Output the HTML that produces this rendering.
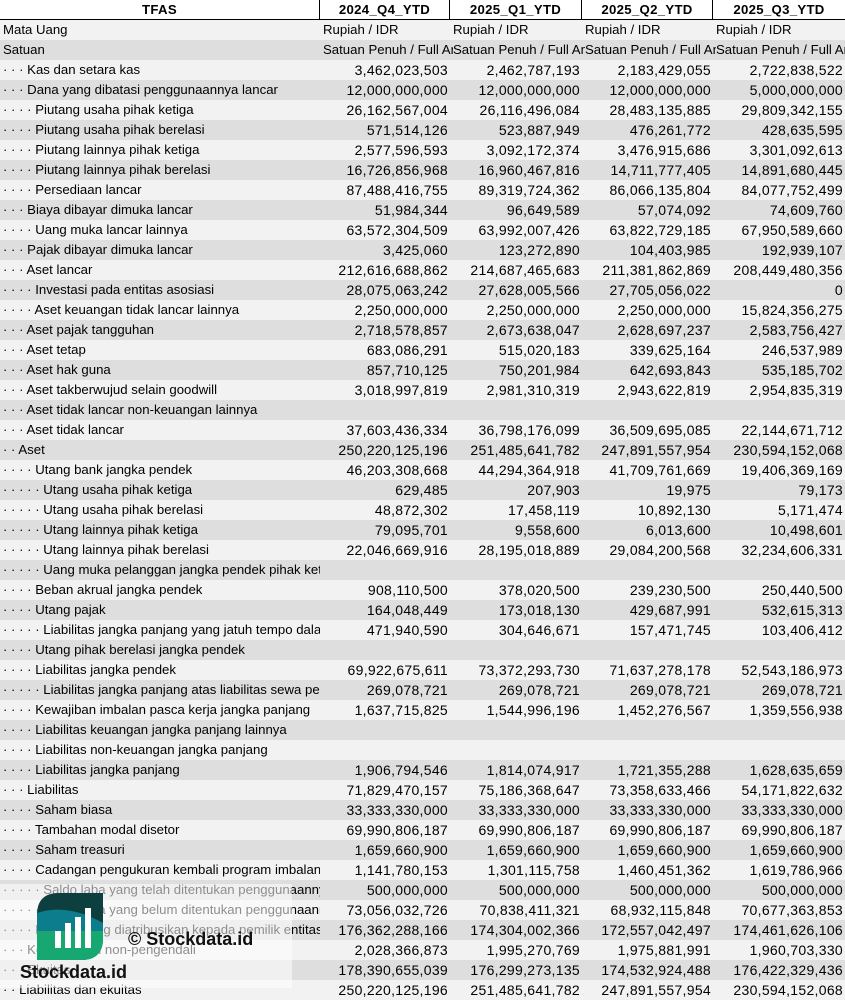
<!DOCTYPE html><html><head><meta charset="utf-8"><style>
body{margin:0;width:845px;height:1001px;overflow:hidden;background:#fff;font-family:"Liberation Sans",Arial,sans-serif;font-size:13.2px;color:#000;position:relative}
.r{position:absolute;left:0;width:845px;height:20px;line-height:20px}
.c{position:absolute;top:0;height:20px;overflow:hidden;white-space:nowrap}
.l{left:3px;width:317px}
.v{text-align:right;padding-right:2px;box-sizing:border-box;font-size:14px;letter-spacing:0.3px}
.c1{left:320px;width:130px}.c2{left:450px;width:132px}.c3{left:582px;width:131px}.c4{left:713px;width:132px}
.h{font-weight:bold;text-align:center;border-right:1px solid #000;box-sizing:border-box;letter-spacing:0.3px}
.tl{text-align:left;padding-left:3px}
</style></head><body>
<div class="r" style="top:0;background:#fff;border-bottom:1.5px solid #000;height:19px">
<div class="c h" style="left:0;width:320px">TFAS</div>
<div class="c h" style="left:320px;width:130px">2024_Q4_YTD</div>
<div class="c h" style="left:450px;width:132px">2025_Q1_YTD</div>
<div class="c h" style="left:582px;width:131px">2025_Q2_YTD</div>
<div class="c h" style="left:713px;width:132px;border-right:none">2025_Q3_YTD</div>
</div>
<div id="rows"></div>
<div style="position:absolute;left:0;top:884px;width:292px;height:104px;background:rgba(255,255,255,0.55)"></div>
<svg style="position:absolute;left:37px;top:893px" width="66" height="67" viewBox="0 0 66 67">
<defs><clipPath id="lf"><path d="M0 22 Q0 0 22 0 L66 0 L66 45 Q66 67 44 67 L0 67 Z"/></clipPath></defs>
<g clip-path="url(#lf)"><rect width="66" height="67" fill="#0e3f3f"/><path d="M0 20 Q30 10 66 30 L66 67 L0 67Z" fill="#0b7d8c"/><path d="M0 38 L66 38 L66 67 L0 67Z" fill="#17a872"/></g>
<rect x="18" y="38" width="6" height="17" fill="#fff"/><rect x="28" y="30" width="6" height="25" fill="#fff"/><rect x="38" y="24" width="6" height="31" fill="#fff"/><rect x="48" y="15" width="6" height="40" fill="#fff"/>
</svg>
<div style="position:absolute;left:128px;top:929px;font-weight:bold;font-size:18px;color:#111">© Stockdata.id</div>
<div style="position:absolute;left:20px;top:962px;font-weight:bold;font-size:18px;color:#111">Stockdata.id</div>
<script>
const D=[
["Mata Uang",0,"Rupiah / IDR","Rupiah / IDR","Rupiah / IDR","Rupiah / IDR",1],
["Satuan",0,"Satuan Penuh / Full Amount","Satuan Penuh / Full Amount","Satuan Penuh / Full Amount","Satuan Penuh / Full Amount",1],
["Kas dan setara kas",3,"3,462,023,503","2,462,787,193","2,183,429,055","2,722,838,522"],
["Dana yang dibatasi penggunaannya lancar",3,"12,000,000,000","12,000,000,000","12,000,000,000","5,000,000,000"],
["Piutang usaha pihak ketiga",4,"26,162,567,004","26,116,496,084","28,483,135,885","29,809,342,155"],
["Piutang usaha pihak berelasi",4,"571,514,126","523,887,949","476,261,772","428,635,595"],
["Piutang lainnya pihak ketiga",4,"2,577,596,593","3,092,172,374","3,476,915,686","3,301,092,613"],
["Piutang lainnya pihak berelasi",4,"16,726,856,968","16,960,467,816","14,711,777,405","14,891,680,445"],
["Persediaan lancar",4,"87,488,416,755","89,319,724,362","86,066,135,804","84,077,752,499"],
["Biaya dibayar dimuka lancar",3,"51,984,344","96,649,589","57,074,092","74,609,760"],
["Uang muka lancar lainnya",4,"63,572,304,509","63,992,007,426","63,822,729,185","67,950,589,660"],
["Pajak dibayar dimuka lancar",3,"3,425,060","123,272,890","104,403,985","192,939,107"],
["Aset lancar",3,"212,616,688,862","214,687,465,683","211,381,862,869","208,449,480,356"],
["Investasi pada entitas asosiasi",4,"28,075,063,242","27,628,005,566","27,705,056,022","0"],
["Aset keuangan tidak lancar lainnya",4,"2,250,000,000","2,250,000,000","2,250,000,000","15,824,356,275"],
["Aset pajak tangguhan",3,"2,718,578,857","2,673,638,047","2,628,697,237","2,583,756,427"],
["Aset tetap",3,"683,086,291","515,020,183","339,625,164","246,537,989"],
["Aset hak guna",3,"857,710,125","750,201,984","642,693,843","535,185,702"],
["Aset takberwujud selain goodwill",3,"3,018,997,819","2,981,310,319","2,943,622,819","2,954,835,319"],
["Aset tidak lancar non-keuangan lainnya",3,"","","",""],
["Aset tidak lancar",3,"37,603,436,334","36,798,176,099","36,509,695,085","22,144,671,712"],
["Aset",2,"250,220,125,196","251,485,641,782","247,891,557,954","230,594,152,068"],
["Utang bank jangka pendek",4,"46,203,308,668","44,294,364,918","41,709,761,669","19,406,369,169"],
["Utang usaha pihak ketiga",5,"629,485","207,903","19,975","79,173"],
["Utang usaha pihak berelasi",5,"48,872,302","17,458,119","10,892,130","5,171,474"],
["Utang lainnya pihak ketiga",5,"79,095,701","9,558,600","6,013,600","10,498,601"],
["Utang lainnya pihak berelasi",5,"22,046,669,916","28,195,018,889","29,084,200,568","32,234,606,331"],
["Uang muka pelanggan jangka pendek pihak ketiga",5,"","","",""],
["Beban akrual jangka pendek",4,"908,110,500","378,020,500","239,230,500","250,440,500"],
["Utang pajak",4,"164,048,449","173,018,130","429,687,991","532,615,313"],
["Liabilitas jangka panjang yang jatuh tempo dalam satu tahun",5,"471,940,590","304,646,671","157,471,745","103,406,412"],
["Utang pihak berelasi jangka pendek",4,"","","",""],
["Liabilitas jangka pendek",4,"69,922,675,611","73,372,293,730","71,637,278,178","52,543,186,973"],
["Liabilitas jangka panjang atas liabilitas sewa pembiayaan",5,"269,078,721","269,078,721","269,078,721","269,078,721"],
["Kewajiban imbalan pasca kerja jangka panjang",4,"1,637,715,825","1,544,996,196","1,452,276,567","1,359,556,938"],
["Liabilitas keuangan jangka panjang lainnya",4,"","","",""],
["Liabilitas non-keuangan jangka panjang",4,"","","",""],
["Liabilitas jangka panjang",4,"1,906,794,546","1,814,074,917","1,721,355,288","1,628,635,659"],
["Liabilitas",3,"71,829,470,157","75,186,368,647","73,358,633,466","54,171,822,632"],
["Saham biasa",4,"33,333,330,000","33,333,330,000","33,333,330,000","33,333,330,000"],
["Tambahan modal disetor",4,"69,990,806,187","69,990,806,187","69,990,806,187","69,990,806,187"],
["Saham treasuri",4,"1,659,660,900","1,659,660,900","1,659,660,900","1,659,660,900"],
["Cadangan pengukuran kembali program imbalan pasti",4,"1,141,780,153","1,301,115,758","1,460,451,362","1,619,786,966"],
["Saldo laba yang telah ditentukan penggunaannya",5,"500,000,000","500,000,000","500,000,000","500,000,000"],
["Saldo laba yang belum ditentukan penggunaannya",5,"73,056,032,726","70,838,411,321","68,932,115,848","70,677,363,853"],
["Ekuitas yang diatribusikan kepada pemilik entitas induk",4,"176,362,288,166","174,304,002,366","172,557,042,497","174,461,626,106"],
["Kepentingan non-pengendali",3,"2,028,366,873","1,995,270,769","1,975,881,991","1,960,703,330"],
["Ekuitas",3,"178,390,655,039","176,299,273,135","174,532,924,488","176,422,329,436"],
["Liabilitas dan ekuitas",2,"250,220,125,196","251,485,641,782","247,891,557,954","230,594,152,068"]];
let h="";D.forEach((d,i)=>{const bg=i%2==0?"#f2f2f2":"#dedede";const dots=d[1]?Array(d[1]).fill("·").join(" ")+" ":"";
const cls=d[6]?"c tl":"c v";
h+=`<div class="r" style="top:${20+i*20}px;background:${bg}"><div class="c l">${dots}${d[0]}</div><div class="${cls} c1">${d[2]}</div><div class="${cls} c2">${d[3]}</div><div class="${cls} c3">${d[4]}</div><div class="${cls} c4">${d[5]}</div></div>`});
document.getElementById("rows").innerHTML=h;
</script>
</body></html>
